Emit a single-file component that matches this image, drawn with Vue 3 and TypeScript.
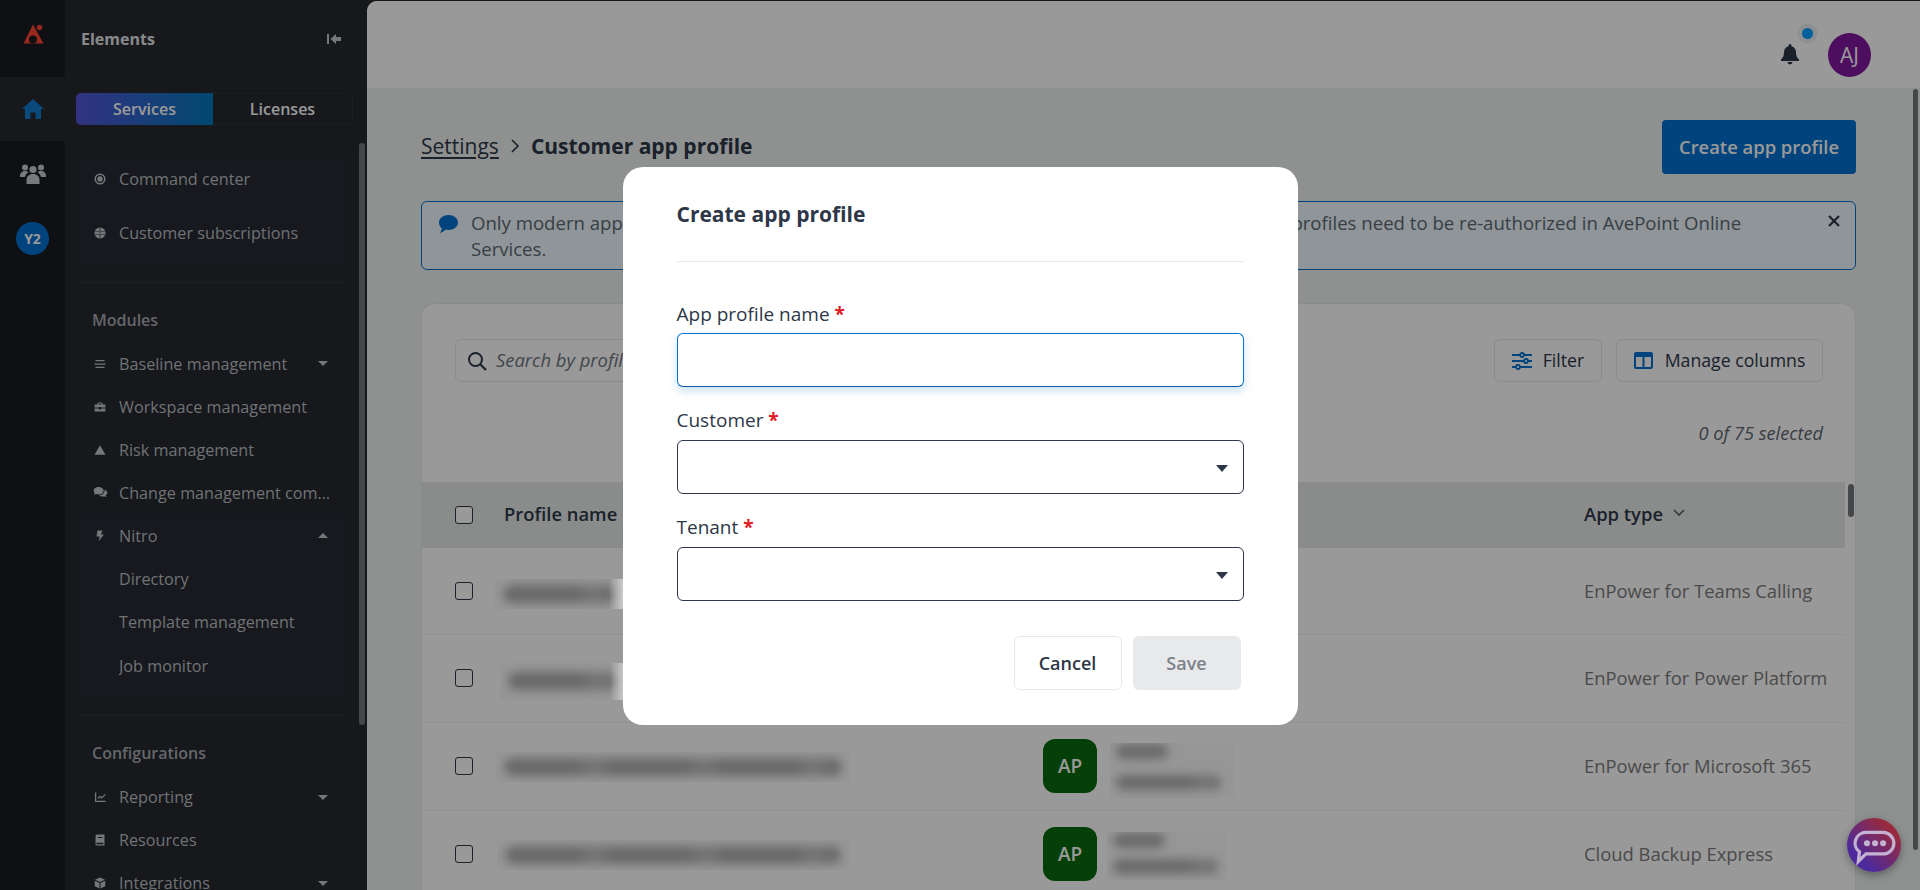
<script setup lang="ts">
interface NavItem { label: string; icon: string; caret?: 'down' | 'up' }
interface Row { type: string; nameWidth: number; nameOffset: number; patch: string; custOffset: number; custWidth: number; custH: number; custTop: number; custGap: number; glint: boolean }

const icons: Record<string, string> = {
  target: 'M12 1a11 11 0 1 0 0 22 11 11 0 0 0 0-22zm0 3a8 8 0 1 1 0 16 8 8 0 0 1 0-16zm0 2.500a5.500 5.500 0 1 0 0 11 5.500 5.500 0 0 0 0-11z',
  globe: 'M12 1a11 11 0 1 0 0 22 11 11 0 0 0 0-22zM2.200 7.800h19.600V9H2.200zM2.200 15h19.600v1.200H2.200zM11.400 1.500h1.200v21h-1.200z',
  bars: 'M3 4h18v2.500H3zM1 10.750h22v2.500H1zM3 17.500h18V20H3z',
  case: 'M9 3h6a2 2 0 0 1 2 2v2h4a2 2 0 0 1 2 2v4h-9v-1h-4v1H1V9a2 2 0 0 1 2-2h4V5a2 2 0 0 1 2-2zm0 2v2h6V5zM1 15h9v2h4v-2h9v4a2 2 0 0 1-2 2H3a2 2 0 0 1-2-2z',
  warn: 'M12 2.500 23 21.500H1z',
  chat: 'M9 3C4.600 3 1 5.700 1 9c0 1.500.7 2.800 1.800 3.800L1.500 16l3.800-1.500c1.100.4 2.400.6 3.700.6 4.400 0 8-2.700 8-6.100S13.400 3 9 3zm9.300 5.100c.1.300.1.600.1.900 0 4-3.800 7.200-8.700 7.500 1.300 1.300 3.200 2 5.300 2 1 0 2-.2 2.900-.5l3.600 1.500-1.200-3c1.700-1.100 2.700-2.700 2.700-4.500 0-1.800-1.900-3.600-4.700-4.400z',
  bolt: 'M7 1h10l-3 8h6L9 23l2.500-10H5z',
  chart: 'M2 3h2.500v16.500H23V22H2zm5 11 5-5 3.500 3L22 6l1.500 1.600-8 7.900-3.500-3-3.500 3.500z',
  book: 'M6 1h15v22H6a3 3 0 0 1-3-3V4a3 3 0 0 1 3-3zm2 5v2h9V6zm-2 11.500a1.500 1.500 0 0 0 0 3h12.500v-3z',
  cube: 'M12 1 22 5.500 12 10 2 5.500zM1.500 7.500l9.500 4.300V23L1.500 18.500zm21 0v11L13 23V11.800z'
}

const topItems: NavItem[] = [
  { label: 'Command center', icon: 'target' },
  { label: 'Customer subscriptions', icon: 'globe' }
]
const moduleItems: NavItem[] = [
  { label: 'Baseline management', icon: 'bars', caret: 'down' },
  { label: 'Workspace management', icon: 'case' },
  { label: 'Risk management', icon: 'warn' },
  { label: 'Change management command center', icon: 'chat' }
]
const nitroChildren = ['Directory', 'Template management', 'Job monitor']
const configItems: NavItem[] = [
  { label: 'Reporting', icon: 'chart', caret: 'down' },
  { label: 'Resources', icon: 'book' },
  { label: 'Integrations', icon: 'cube', caret: 'down' }
]

const rows: Row[] = [
  { type: 'EnPower for Teams Calling', nameWidth: 128, nameOffset: -9, patch: 'short', custOffset: 13, custWidth: 125, custH: 56, custTop: 10, custGap: 16, glint: true },
  { type: 'EnPower for Power Platform', nameWidth: 124, nameOffset: -4, patch: 'short tall', custOffset: 13, custWidth: 125, custH: 56, custTop: 10, custGap: 16, glint: true },
  { type: 'EnPower for Microsoft 365', nameWidth: 354, nameOffset: -8, patch: 'long', custOffset: 13, custWidth: 125, custH: 56, custTop: 10, custGap: 16, glint: false },
  { type: 'Cloud Backup Express', nameWidth: 352, nameOffset: -7, patch: 'long', custOffset: 10, custWidth: 120, custH: 48, custTop: 4, custGap: 11, glint: false }
]
</script>

<template>
  <div class="app">
    <aside class="rail">
      <div class="rail-logo">
        <svg width="24" height="24" viewBox="0 0 24 24">
          <path fill="#ff4535" d="M12 2.500 22.500 21.500H2.500z" />
          <circle cx="12" cy="17.500" r="4" fill="#191c21" />
          <circle cx="18.500" cy="5.500" r="3.200" fill="#ff4535" stroke="#191c21" stroke-width="1" />
        </svg>
      </div>
      <div class="rail-item active">
        <svg width="22" height="20" viewBox="0 0 22 20"><path fill="#117bcf" d="M11 0 22 10h-3v10h-5.500v-6.500h-5V20H3V10H0z" /></svg>
      </div>
      <div class="rail-item people">
        <svg width="26" height="20" viewBox="0 0 26 20"><g fill="#c8cacc"><circle cx="13" cy="5.500" r="3.600" /><circle cx="5" cy="3.500" r="3" /><circle cx="21" cy="3.500" r="3" /><path d="M6.500 20v-4c0-3.500 2.500-6 6.500-6s6.500 2.500 6.500 6v4z" /><path d="M0 12c0-3 2-5 5-5 1.500 0 2.600.4 3.400 1.200C6.500 9.500 5.300 11 5 13H0zM26 12c0-3-2-5-5-5-1.500 0-2.600.4-3.400 1.200 1.900 1.300 3.100 2.800 3.400 4.800h5z" /></g></svg>
      </div>
      <div class="rail-item">
        <span class="org">Y2</span>
      </div>
    </aside>

    <nav class="panel">
      <div class="panel-head">
        <span class="panel-title">Elements</span>
        <svg width="14" height="12" viewBox="0 0 14 12"><path fill="#c4c6ca" d="M0 1h2v10H0zM9 1v3h5v4H9v3L3.500 6z" /></svg>
      </div>
      <div class="segment">
        <span class="seg on">Services</span>
        <span class="seg">Licenses</span>
      </div>

      <div class="nav-scroll">
        <div class="section top">
          <div v-for="it in topItems" :key="it.label" class="item">
            <svg class="ico" viewBox="0 0 24 24"><path fill-rule="evenodd" :d="icons[it.icon]" /></svg>
            <span class="label">{{ it.label }}</span>
          </div>
        </div>
        <div class="divider"></div>

        <div class="heading">Modules</div>
        <div v-for="it in moduleItems" :key="it.label" class="item">
          <svg class="ico" :class="{ wide: it.icon === 'chat' }" viewBox="0 0 24 24"><path fill-rule="evenodd" :d="icons[it.icon]" /></svg>
          <span class="label">{{ it.label }}</span>
          <i v-if="it.caret" class="caret"></i>
        </div>
        <div class="section group">
          <div class="item">
            <svg class="ico" viewBox="0 0 24 24"><path :d="icons.bolt" /></svg>
            <span class="label">Nitro</span>
            <i class="caret up"></i>
          </div>
          <div v-for="c in nitroChildren" :key="c" class="item child">
            <span class="label">{{ c }}</span>
          </div>
        </div>
        <div class="divider"></div>

        <div class="heading conf">Configurations</div>
        <div v-for="it in configItems" :key="it.label" class="item">
          <svg class="ico" viewBox="0 0 24 24"><path fill-rule="evenodd" :d="icons[it.icon]" /></svg>
          <span class="label">{{ it.label }}</span>
          <i v-if="it.caret" class="caret"></i>
        </div>
      </div>
      <div class="panel-thumb"></div>
    </nav>

    <main class="main">
      <header class="topbar">
        <div class="bell">
          <svg width="18" height="21" viewBox="0 0 18 21"><path fill="#2d3748" d="M9 0a1.500 1.500 0 0 1 1.500 1.500v.7C13.200 2.900 15 5.300 15 8c0 4 1 5.500 3 7.500V17H0v-1.500C2 13.500 3 12 3 8c0-2.700 1.800-5.100 4.500-5.800v-.7A1.500 1.500 0 0 1 9 0zM6.500 18h5a2.500 2.500 0 0 1-5 0z" /></svg>
          <span class="dot"></span>
        </div>
        <span class="avatar">AJ</span>
      </header>

      <div class="content">
        <div class="page-head">
          <div class="crumbs">
            <span class="crumb-link">Settings</span>
            <svg width="10" height="16" viewBox="0 0 10 16"><path fill="none" stroke="#2d3748" stroke-width="1.600" d="M2 2l6 6-6 6" /></svg>
            <span class="crumb-now">Customer app profile</span>
          </div>
          <button class="primary">Create app profile</button>
        </div>

        <div class="alert">
          <svg class="alert-ico" width="19" height="18" viewBox="0 0 19 18"><path fill="#0271cf" d="M9.500 0C14.700 0 19 3.400 19 7.500S14.700 15 9.500 15c-1 0-2-.1-2.900-.4C5 16.400 3 17.600.5 18c1-1 2-2.500 2.300-4.500C1 12 0 9.900 0 7.500 0 3.400 4.300 0 9.500 0z" /></svg>
          <p class="alert-text">Only modern app profiles are supported when you add more services to Elements. Classic app profiles need to be re-authorized in AvePoint Online Services.</p>
          <svg class="alert-x" width="12" height="12" viewBox="0 0 12 12"><path stroke="#2d3748" stroke-width="2.200" d="M1 1l10 10M11 1 1 11" /></svg>
        </div>

        <section class="card">
          <div class="tools">
            <div class="search">
              <svg width="20" height="20" viewBox="0 0 20 20"><circle cx="8.500" cy="8.500" r="6.500" fill="none" stroke="#2d3748" stroke-width="2" /><path stroke="#2d3748" stroke-width="2.200" d="M13.500 13.500 19 19" /></svg>
              <span class="placeholder">Search by profile name or customer</span>
            </div>
            <button class="tool filter">
              <svg width="20" height="20" viewBox="0 0 20 20"><g fill="none" stroke="#0271cf" stroke-width="1.800"><path d="M0 4h8M12 4h8M0 10h12M16 10h4M0 16h4M8 16h12" /><circle cx="10" cy="4" r="2" /><circle cx="14" cy="10" r="2" /><circle cx="6" cy="16" r="2" /></g></svg>
              Filter
            </button>
            <button class="tool columns">
              <svg width="19" height="17" viewBox="0 0 19 17"><path fill="#0271cf" fill-rule="evenodd" d="M2 0h15a2 2 0 0 1 2 2v13a2 2 0 0 1-2 2H2a2 2 0 0 1-2-2V2a2 2 0 0 1 2-2zm0 5v10h6.500V5zm8.500 0v10H17V5z" /></svg>
              Manage columns
            </button>
          </div>
          <div class="selected">0 of 75 selected</div>

          <div class="table">
            <div class="thead grid">
              <span class="check-cell"><i class="check"></i></span>
              <span class="head-text">Profile name</span>
              <span class="head-text">Customer</span>
              <span class="sort head-text">App type
                <svg width="12" height="8" viewBox="0 0 12 8"><path fill="none" stroke="#5b6068" stroke-width="1.600" d="M1 1l5 5 5-5" /></svg>
              </span>
            </div>
            <div v-for="r in rows" :key="r.type" class="row grid">
              <span class="check-cell"><i class="check"></i></span>
              <span class="name-cell">
                <span class="patch" :class="r.patch" :style="{ width: r.nameWidth + 'px', marginLeft: r.nameOffset + 'px' }">
                  <i class="smear"></i>
                  <i v-if="r.glint" class="glint"></i>
                </span>
              </span>
              <span class="cust-cell">
                <span class="ap">AP</span>
                <span class="cust-patch" :style="{ width: r.custWidth + 'px', marginLeft: r.custOffset + 'px', height: r.custH + 'px', marginTop: r.custTop + 'px' }">
                  <i class="smear s1"></i><i class="smear s2" :style="{ marginTop: r.custGap + 'px' }"></i>
                </span>
              </span>
              <span class="type">{{ r.type }}</span>
            </div>
            <div class="table-thumb"></div>
          </div>
        </section>
      </div>
      <div class="main-thumb"></div>
    </main>

    <div class="overlay">
      <form class="modal" @submit.prevent>
        <h2 class="modal-title">Create app profile</h2>
        <label class="field-label first">App profile name <em>*</em></label>
        <div class="control focus"></div>
        <label class="field-label">Customer <em>*</em></label>
        <div class="control"><i class="select-caret"></i></div>
        <label class="field-label">Tenant <em>*</em></label>
        <div class="control"><i class="select-caret"></i></div>
        <div class="actions">
          <button type="button" class="btn cancel">Cancel</button>
          <button type="button" class="btn save" disabled>Save</button>
        </div>
      </form>
    </div>

    <div class="chat">
      <svg viewBox="0 0 40 34"><path fill="none" stroke="#c4b2d2" stroke-width="3" d="M12 3h16a10 10 0 0 1 0 20H12l-7 7 1-9A10 10 0 0 1 12 3z" /><g fill="#c4b2d2"><circle cx="13" cy="13" r="2.800" /><circle cx="20.500" cy="13" r="2.800" /><circle cx="28" cy="13" r="2.800" /></g></svg>
    </div>
  </div>
</template>

<style>
html, body { margin: 0; background: #191c21; overflow: hidden; }
</style>

<style scoped>
.app {
  position: relative;
  display: flex;
  width: 1920px;
  height: 890px;
  overflow: hidden;
  font-family: "Open Sans", "Noto Sans", sans-serif;
  color: #2d3748;
  background: #252830;
}
.rail { width: 65px; flex: none; background: #191c21; }
.rail-logo { height: 77px; display: flex; align-items: center; justify-content: center; box-sizing: border-box; }
.rail-logo svg { margin-top: -10px; }
.rail-item { height: 64px; display: flex; align-items: center; justify-content: center; }
.rail-item.active { background: #252830; }
.rail-item.people svg { margin-top: 2px; }
.org {
  width: 33px; height: 33px; margin-top: 3px; border-radius: 50%;
  background: #0271cf; color: #fff;
  font-size: 14px; font-weight: 700;
  display: flex; align-items: center; justify-content: center;
}

.panel {
  position: relative;
  width: 302px; flex: none; box-sizing: border-box;
  padding-left: 11px;
  background: #252830;
  color: #bbbec2;
  overflow: hidden;
}
.panel-head {
  height: 77px; box-sizing: border-box;
  display: flex; align-items: center; justify-content: space-between;
  padding: 0 26px 0 5px;
}
.panel-title { font-size: 16px; font-weight: 700; color: #e2e4e6; }
.segment {
  display: flex; width: 277px; height: 32px; margin-top: 16px;
  box-sizing: border-box; border: 1px solid #30333b; border-radius: 5px;
  font-size: 16px; font-weight: 600; color: #fff;
}
.seg { display: flex; align-items: center; justify-content: center; flex: 1; }
.seg.on {
  flex: none; width: 137px; margin: -1px 0 -1px -1px;
  border-radius: 5px 0 0 5px;
  background: linear-gradient(90deg, #5455d6, #0079bd);
}
.nav-scroll { width: 270px; margin-top: 33px; }
.section { background: #282b33; }
.section.top { padding-bottom: 11px; display: flex; flex-direction: column; gap: 12px; }
.section.top .item { height: 42px; }
.section.group { padding-bottom: 10px; }
.divider { height: 1px; margin-top: 17px; background: #32353d; }
.heading { margin: 25px 0 10px 16px; height: 24px; line-height: 24px; font-size: 16px; font-weight: 600; color: #a8abb0; }
.heading.conf { margin-bottom: 11px; }
.item {
  display: flex; align-items: center; height: 43px; box-sizing: border-box;
  padding: 0 14px 0 18px; font-size: 16.200px;
}
.item.child { padding-left: 43px; height: 43.500px; }
.ico { width: 12px; height: 12px; flex: none; margin-right: 13px; fill: #c4c6ca; }
.ico.wide { width: 15px; height: 15px; margin: 0 11.500px 0 -1.500px; }
.label { flex: 1; min-width: 0; white-space: nowrap; overflow: hidden; text-overflow: ellipsis; }
.caret {
  flex: none; width: 0; height: 0; margin-left: 4px; margin-right: 4px;
  border-left: 5px solid transparent; border-right: 5px solid transparent;
  border-top: 5px solid #c4c6ca;
}
.caret.up { border-top: 0; border-bottom: 5px solid #c4c6ca; }
.panel-thumb { position: absolute; left: 294px; top: 143px; width: 6px; height: 582px; border-radius: 3px; background: #73777a; }

.main {
  position: relative;
  flex: 1; min-width: 0; margin-top: 1px;
  background: #eef2f0;
  border-top-left-radius: 10px;
  overflow: hidden;
}
.topbar {
  height: 87px; box-sizing: border-box; background: #fff;
  display: flex; align-items: center; justify-content: flex-end;
  padding: 21px 49px 0 0; gap: 29px;
}
.bell { position: relative; display: flex; margin-top: -1px; }
.dot {
  position: absolute; left: 21px; top: -16px;
  width: 11px; height: 11px; border-radius: 50%;
  background: #00a0ff; box-shadow: 0 0 0 4.500px #eceef0;
}
.avatar {
  width: 43px; height: 44px; border-radius: 50%;
  background: #83189e; color: #fff;
  display: flex; align-items: center; justify-content: center;
  font-size: 21px;
}
.content { padding: 32px 64px 0 54px; }
.page-head { display: flex; align-items: center; justify-content: space-between; height: 54px; }
.crumbs { display: flex; align-items: center; gap: 11px; font-size: 21px; margin-top: -3px; }
.crumb-link { text-decoration: underline; text-underline-offset: 3px; }
.crumb-now { font-weight: 700; }
.primary {
  width: 194px; height: 54px; border: 0; border-radius: 4px; padding: 0 0 2px;
  background: #0271cf; color: #fff;
  font: 600 18.400px "Open Sans", sans-serif;
}
.alert {
  display: flex; align-items: flex-start; box-sizing: border-box;
  height: 69px; margin-top: 27px; padding: 8px 15px 0 17px;
  border: 1px solid #0271cf; border-radius: 6px; background: #eef8ff;
}
.alert-ico { flex: none; margin: 5px 13px 0 0; }
.alert-text { flex: 1; margin: 0 20px 0 0; font-size: 18.600px; line-height: 26px; color: #5e6a72; }
.alert-x { flex: none; margin-top: 5px; }
.card {
  margin-top: 33px; height: 600px;
  background: #fff; border: 1px solid #e6e8ea; border-radius: 14px;
}
.tools { display: flex; align-items: center; justify-content: flex-end; padding: 35px 32px 0 33px; gap: 14px; }
.tool, .search {
  height: 43px; box-sizing: border-box;
  border: 1px solid #e6e8ea; border-radius: 6px; background: #fff;
}
.search {
  width: 640px; margin-right: auto; display: flex; align-items: center; gap: 9px; padding: 0 0 2px 11px;
}
.search svg { margin-top: 2px; }
.placeholder { font-size: 18.400px; font-style: italic; color: #6e7680; white-space: nowrap; }
.tool {
  display: flex; align-items: center; justify-content: center; gap: 11px;
  padding: 0 0 2px;
  font: 500 17.700px "Open Sans", sans-serif; color: #2d3748;
}
.tool svg { margin-top: 2px; }
.filter { width: 108px; }
.columns { width: 207px; gap: 12px; }
.selected {
  margin-top: 38px; padding-right: 32px; height: 26px; line-height: 26px;
  text-align: right; font-size: 18.200px; font-style: italic; color: #5e6670;
}
.table { position: relative; margin-top: 36px; width: 1423px; }
.grid { display: grid; grid-template-columns: 82px 539px 541px 1fr; align-items: center; }
.thead { height: 66px; background: #e6eae8; font-size: 18.400px; font-weight: 600; }
.head-text { margin-top: -4px; }
.row { height: 88px; box-sizing: border-box; border-bottom: 1px solid #eeeeee; }
.thead + .row { height: 86.500px; }
.check-cell { display: flex; padding-left: 33px; }
.check { width: 18px; height: 18px; box-sizing: border-box; border: 1.500px solid #2d3748; border-radius: 3px; background: #fff; }
.sort { display: flex; align-items: center; gap: 10px; }
.type { font-size: 18.400px; color: #7c7c7c; white-space: nowrap; margin-top: -1px; }
.name-cell { display: flex; align-items: center; padding-top: 6px; }
.patch {
  position: relative;
  display: flex; align-items: center; flex: none; height: 30px; padding: 0 8px;
  box-sizing: border-box; overflow: hidden; background: #fafafa;
}
.patch.tall { height: 37px; }
.patch.long { margin-top: -4px; }
.smear {
  display: block; flex: 1; height: 18px; border-radius: 9px;
  background: repeating-linear-gradient(90deg, #b0b0b0 0 70px, #c4c4c4 90px, #b0b0b0 110px);
  filter: blur(5px);
}
.glint {
  position: absolute; z-index: 1; right: 0; top: 0; bottom: 0; width: 14px;
  background: linear-gradient(90deg, rgba(255, 255, 255, 0), rgba(255, 255, 255, .5));
}
.cust-cell { display: flex; align-items: center; }
.ap {
  width: 54px; height: 54px; flex: none; border-radius: 12px;
  background: #076a0d; color: #fff;
  display: flex; align-items: center; justify-content: center;
  font-size: 19px; font-weight: 600;
}
.cust-patch { display: block; box-sizing: border-box; padding: 1px 6px; background: #fafafa; overflow: hidden; }
.smear.s1 { width: 52px; height: 15px; }
.smear.s2 { width: 105px; height: 15px; }
.table-thumb { position: absolute; left: 1426px; top: 2px; width: 6px; height: 33px; border-radius: 3px; background: #737678; }
.main-thumb { position: absolute; left: 1546px; top: 88px; width: 5px; height: 761px; border-radius: 3px; background: #73777a; }

.overlay {
  position: absolute; inset: 0;
  display: flex; align-items: center; justify-content: center;
  background: rgba(0, 0, 0, .4);
}
.modal {
  width: 675px; height: 558px; box-sizing: border-box;
  padding: 33px 54px 35px;
  margin-top: 1px;
  background: #fff; border-radius: 20px;
  color: #2d3748;
}
.modal-title {
  margin: 0; padding-bottom: 33px; line-height: 28px;
  font-size: 21px; font-weight: 700;
  border-bottom: 1px solid #e8e9eb;
}
.field-label {
  display: block; height: 24px; line-height: 24px; margin: 21px 0 8px;
  font-size: 19px; font-weight: 500;
}
.field-label.first { margin-top: 40px; margin-bottom: 7px; }
.field-label em { font-style: normal; color: #e01b24; font-weight: 700; }
.control {
  position: relative;
  height: 54px; box-sizing: border-box;
  border: 1.500px solid #2d3748; border-radius: 6px; background: #fff;
}
.control.focus {
  border-color: #0271cf; border-bottom-color: #0b5ba0;
  box-shadow: 0 4px 10px rgba(2, 113, 207, .22);
}
.select-caret {
  position: absolute; right: 15px; top: 24px;
  width: 0; height: 0;
  border-left: 6px solid transparent; border-right: 6px solid transparent;
  border-top: 7px solid #2d3748;
}
.actions { display: flex; justify-content: flex-end; gap: 11px; margin-top: 35px; padding-right: 3px; }
.btn {
  width: 108px; height: 54px; box-sizing: border-box; border-radius: 6px;
  font: 600 18px "Open Sans", sans-serif;
}
.cancel { background: #fff; border: 1px solid #e8e9eb; color: #2d3748; }
.save { background: #e8e9eb; border: 0; color: #7d828a; }

.chat {
  position: absolute; left: 1847px; top: 818px;
  width: 54px; height: 54px; border-radius: 50%;
  display: flex; align-items: center; justify-content: center;
  background: linear-gradient(45deg, #4d2a9c 25%, #a52a2e 90%);
  box-shadow: 0 3px 8px rgba(0, 0, 0, .35);
}
.chat svg { width: 43px; height: 37px; margin-top: 4px; }
</style>
